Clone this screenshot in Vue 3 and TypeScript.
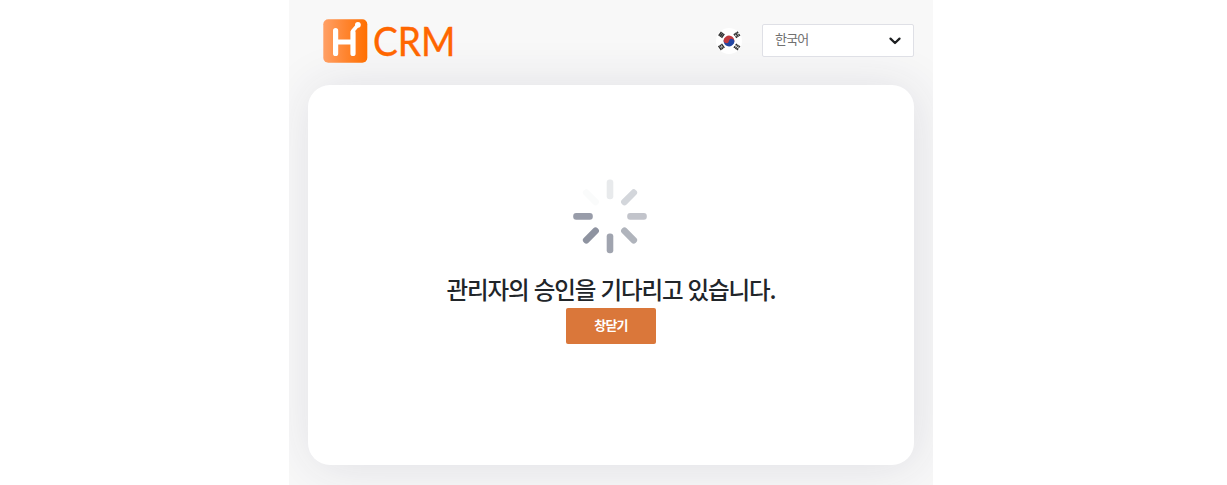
<script setup lang="ts">
interface Spoke {
  angle: number
  color: string
}

interface Trigram {
  x: number
  y: number
  angle: number
  path: string
}

const spokes: Spoke[] = [
  { angle: 0, color: '#e8eaec' },
  { angle: 45, color: '#d3d6db' },
  { angle: 90, color: '#c2c4cb' },
  { angle: 135, color: '#b0b4bc' },
  { angle: 180, color: '#a0a4af' },
  { angle: 225, color: '#8e93a0' },
  { angle: 270, color: '#989ca9' },
  { angle: 315, color: '#fafbfb' },
]

const trigrams: Trigram[] = [
  { x: 5.5, y: 6.8, angle: -55, path: 'M-2.4-1.7H2.4M-2.4 0H2.4M-2.4 1.7H2.4' },
  { x: 20.9, y: 6.8, angle: 55, path: 'M-2.5-1.8H-.4M.4-1.8H2.5M-2.5 0H2.5M-2.5 1.8H-.4M.4 1.8H2.5' },
  { x: 5.4, y: 18.9, angle: 55, path: 'M-2.5-1.8H2.5M-2.5 0H-.4M.4 0H2.5M-2.5 1.8H2.5' },
  { x: 20.9, y: 18.9, angle: -55, path: 'M-2.5-1.8H-.4M.4-1.8H2.5M-2.5 0H-.4M.4 0H2.5M-2.5 1.8H-.4M.4 1.8H2.5' },
]

function closeWindow(): void {
  window.close()
}
</script>

<template>
  <main class="frame">
    <header class="header">
      <svg class="logo" width="132" height="46" viewBox="0 0 132 46" role="img" aria-label="H CRM">
        <defs>
          <linearGradient id="tile" x1="0" y1="0" x2="1" y2="0">
            <stop offset="0" stop-color="#ffa066" />
            <stop offset="0.5" stop-color="#ff8530" />
            <stop offset="1" stop-color="#ff6f00" />
          </linearGradient>
        </defs>
        <rect x="0.3" y="1.3" width="44" height="43.5" rx="5" fill="url(#tile)" />
        <g fill="none" stroke="#fff" stroke-linecap="round" stroke-linejoin="round">
          <path d="M12.6 12.6V35.5M30 14.5V35.5" stroke-width="5.2" />
          <path d="M12.6 24H30" stroke-width="5" stroke-linecap="butt" />
          <path d="M29.5 13.2L34.5 7.5" stroke-width="3.6" />
        </g>
        <circle cx="34.9" cy="6.8" r="2.9" fill="#fff" />
        <text x="50" y="37.8" class="logo-text" textLength="82.4" lengthAdjust="spacingAndGlyphs">CRM</text>
      </svg>

      <div class="language">
        <svg class="flag" width="26" height="26" viewBox="0 0 26 26" aria-hidden="true">
          <circle cx="13" cy="13" r="13" fill="#fff" />
          <g transform="rotate(12 13 13)">
            <path d="M7.6 13a5.4 5.4 0 0 1 10.8 0z" fill="#c23a3f" />
            <path d="M7.6 13a5.4 5.4 0 0 0 10.8 0z" fill="#2346a3" />
            <circle cx="10.3" cy="13" r="2.7" fill="#c23a3f" />
            <circle cx="15.7" cy="13" r="2.7" fill="#2346a3" />
          </g>
          <path
            v-for="(trigram, index) in trigrams"
            :key="index"
            :d="trigram.path"
            :transform="`translate(${trigram.x} ${trigram.y}) rotate(${trigram.angle})`"
            stroke="#333"
            stroke-width="1.5"
            fill="none"
          />
        </svg>
        <button class="select" type="button">
          <span>한국어</span>
          <svg width="12" height="8" viewBox="0 0 12 8" aria-hidden="true">
            <path d="M1.5 1.6L6 6L10.5 1.6" fill="none" stroke="#1d1f21" stroke-width="2.2" stroke-linecap="round" stroke-linejoin="round" />
          </svg>
        </button>
      </div>
    </header>

    <section class="card">
      <svg class="spinner" width="76" height="76" viewBox="-38 -38.4 76 76" aria-hidden="true">
        <rect
          v-for="spoke in spokes"
          :key="spoke.angle"
          x="-3.3"
          y="-36.8"
          width="6.6"
          height="19.6"
          rx="3"
          :fill="spoke.color"
          :transform="`rotate(${spoke.angle})`"
        />
      </svg>
      <h1 class="title">관리자의 승인을 기다리고 있습니다.</h1>
      <button class="close" type="button" @click="closeWindow">창닫기</button>
    </section>
  </main>
</template>

<style>
body {
  margin: 0;
  background: #fff;
}
</style>

<style scoped>
.frame {
  box-sizing: border-box;
  width: 644px;
  height: 485px;
  margin-left: 289px;
  padding: 0 19px;
  overflow: hidden;
  background: #f8f8f8;
  font-family: "Noto Sans CJK KR", sans-serif;
  letter-spacing: -0.05em;
}

.header {
  display: flex;
  justify-content: space-between;
  height: 85.4px;
}

.logo {
  margin: 18px 0 0 15px;
  overflow: visible;
}

.logo-text {
  font-family: Lato, sans-serif;
  font-size: 40px;
  letter-spacing: 0;
  fill: #ff6600;
  stroke: #ff6600;
  stroke-width: 0.4px;
}

.language {
  display: flex;
  align-items: center;
  gap: 20px;
  height: 33px;
  margin-top: 24px;
}

.select {
  box-sizing: border-box;
  display: flex;
  align-items: center;
  justify-content: space-between;
  width: 152px;
  height: 33px;
  padding: 0 12px;
  border: 1px solid #dfe0e6;
  border-radius: 2px;
  background: #fff;
  color: #707070;
  font: inherit;
  font-size: 13px;
  letter-spacing: inherit;
}

.select span {
  position: relative;
  top: -2px;
}

.card {
  display: flex;
  flex-direction: column;
  align-items: center;
  box-sizing: border-box;
  width: 606px;
  height: 380px;
  padding-top: 93px;
  border-radius: 22px;
  background: #fff;
  box-shadow: 3px 2px 50px rgba(40, 45, 80, 0.12);
}

.spinner {
  margin-right: 2px;
}

.title {
  margin: 17px 0 0;
  color: #212529;
  font-size: 23.5px;
  font-weight: 500;
  line-height: 36.4px;
  letter-spacing: -1.12px;
  word-spacing: 1px;
  white-space: nowrap;
}

.close {
  width: 90px;
  height: 36px;
  padding: 0 0 2px;
  border: 0;
  border-radius: 2px;
  background: #da773a;
  color: #fff;
  font: inherit;
  font-size: 13px;
  font-weight: 700;
  letter-spacing: inherit;
}
</style>
